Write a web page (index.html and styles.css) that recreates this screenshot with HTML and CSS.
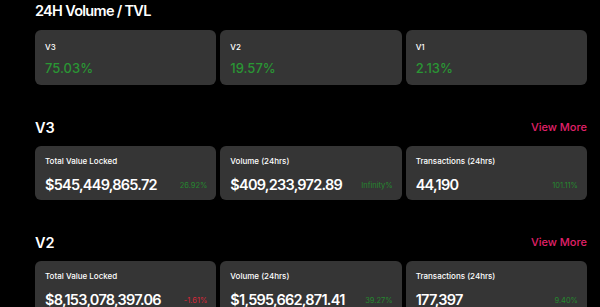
FILE: index.html
```html
<!DOCTYPE html>
<html>
<head>
<meta charset="utf-8">
<link rel="stylesheet" href="styles.css">
</head>
<body>
<main class="page">
  <section class="ratio">
    <h2 class="title">24H Volume / TVL</h2>
    <div class="grid">
      <div class="card small"><div class="label">V3</div><div class="pct-big">75.03%</div></div>
      <div class="card small"><div class="label">V2</div><div class="pct-big">19.57%</div></div>
      <div class="card small"><div class="label">V1</div><div class="pct-big">2.13%</div></div>
    </div>
  </section>

  <section class="version">
    <div class="head"><h2 class="vtitle">V3</h2><a class="more">View More</a></div>
    <div class="grid">
      <div class="card stat"><div class="label">Total Value Locked</div><div class="row"><span class="value">$545,449,865.72</span><span class="chg up">26.92%</span></div></div>
      <div class="card stat"><div class="label">Volume (24hrs)</div><div class="row"><span class="value">$409,233,972.89</span><span class="chg up">Infinity%</span></div></div>
      <div class="card stat"><div class="label">Transactions (24hrs)</div><div class="row"><span class="value">44,190</span><span class="chg up">101.11%</span></div></div>
    </div>
  </section>

  <section class="version">
    <div class="head"><h2 class="vtitle">V2</h2><a class="more">View More</a></div>
    <div class="grid">
      <div class="card stat"><div class="label">Total Value Locked</div><div class="row"><span class="value">$8,153,078,397.06</span><span class="chg down">-1.61%</span></div></div>
      <div class="card stat"><div class="label">Volume (24hrs)</div><div class="row"><span class="value">$1,595,662,871.41</span><span class="chg up">39.27%</span></div></div>
      <div class="card stat"><div class="label">Transactions (24hrs)</div><div class="row"><span class="value">177,397</span><span class="chg up">9.40%</span></div></div>
    </div>
  </section>
</main>
</body>
</html>
```
FILE: styles.css
```css
* { box-sizing: border-box; }
html, body { margin: 0; background: #000; }
body {
  font-family: Inter, "Noto Sans", sans-serif;
  color: #fff;
  overflow: hidden;
}
.page {
  width: 552px;
  margin-left: 35px;
}
h2 { margin: 0; }
.title {
  font-size: 14.5px;
  font-weight: 600;
  letter-spacing: -0.7px;
  line-height: 20px;
  padding-top: 1px;
  margin-bottom: 9px;
}
.grid {
  display: grid;
  grid-template-columns: repeat(3, 1fr);
  gap: 4px;
}
.card {
  background: #353535;
  border-radius: 6px;
  padding: 0 10px;
}
.card.small {
  height: 55px;
  padding-top: 11px;
}
.label {
  font-size: 8px;
  font-weight: 500;
  line-height: 12px;
}
.pct-big {
  margin-top: 7px;
  font-size: 13px;
  font-weight: 500;
  color: #2a9634;
  line-height: 16px;
}
.version { margin-top: 32px; }
.head {
  display: flex;
  justify-content: space-between;
  align-items: center;
  height: 20px;
  margin-bottom: 9px;
}
.vtitle {
  font-size: 14.5px;
  font-weight: 600;
}
.more {
  color: #e0206a;
  font-size: 11px;
  font-weight: 500;
}
.card.stat {
  height: 54px;
  padding: 9px 9px 0 10px;
}
.row {
  display: flex;
  justify-content: space-between;
  align-items: center;
  margin-top: 8px;
}
.value {
  font-size: 14.5px;
  font-weight: 600;
  letter-spacing: -0.75px;
  line-height: 20px;
}
.chg { font-size: 7.5px; }
.up { color: #25882f; }
.down { color: #d8283a; }
```
